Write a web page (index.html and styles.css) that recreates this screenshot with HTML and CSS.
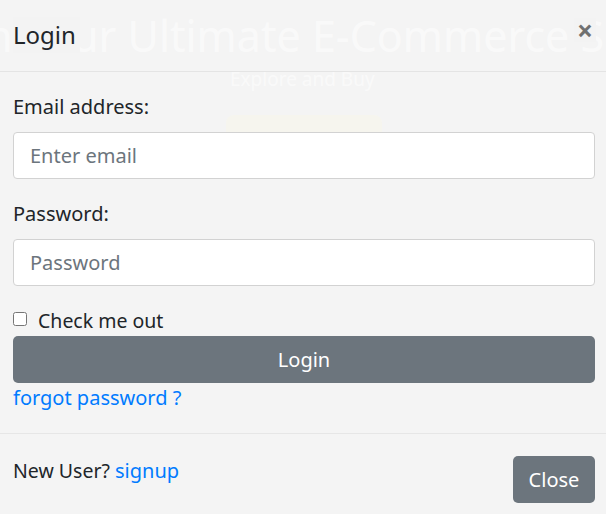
FILE: index.html
```html
<!DOCTYPE html>
<html>
<head>
<meta charset="utf-8">
<link rel="stylesheet" href="styles.css">
</head>
<body>
<div class="page">
  <div class="backdrop">
    <div class="bg-title">n Your Ultimate E-Commerce S</div>
    <div class="bg-sub">Explore and Buy</div>
    <div class="bg-btn"></div>
  </div>
  <div class="modal">
    <div class="modal-header">
      <h5 class="modal-title">Login</h5>
      <span class="close">&times;</span>
    </div>
    <div class="modal-body">
      <label class="label">Email address:</label>
      <input class="input" type="email" placeholder="Enter email">
      <label class="label label-pw">Password:</label>
      <input class="input" type="password" placeholder="Password">
      <div class="check">
        <input type="checkbox" class="checkbox">
        <span class="check-text">Check me out</span>
      </div>
      <button class="btn btn-block">Login</button>
      <a class="link forgot">forgot password ?</a>
    </div>
    <div class="modal-footer">
      <div class="new-user">New User? <a class="link">signup</a></div>
      <button class="btn btn-close">Close</button>
    </div>
  </div>
</div>
</body>
</html>
```

FILE: styles.css
```css
html, body {
  margin: 0;
  padding: 0;
  background: #f4f4f4;
}
.page {
  position: relative;
  width: 606px;
  height: 514px;
  overflow: hidden;
  font-family: "Noto Sans", "Open Sans", sans-serif;
  color: #212529;
}
.backdrop {
  position: absolute;
  left: 0;
  top: 0;
  width: 606px;
  height: 514px;
}
.bg-title {
  position: absolute;
  top: 6px;
  left: -14px;
  white-space: nowrap;
  font-size: 43px;
  color: rgba(255, 255, 255, 0.55);
}
.bg-sub {
  position: absolute;
  top: 66px;
  left: 230px;
  font-size: 19px;
  color: rgba(255, 255, 255, 0.55);
}
.bg-btn {
  position: absolute;
  top: 115px;
  left: 226px;
  width: 156px;
  height: 30px;
  border-radius: 8px;
  background: #f6f5ee;
}
.modal {
  position: relative;
  display: flex;
  flex-direction: column;
}
.modal-header {
  display: flex;
  justify-content: space-between;
  align-items: center;
  padding: 17px 10px 18px 13px;
  border-bottom: 1px solid #e4e4e4;
}
.modal-title {
  margin: 0;
  font-size: 24px;
  font-weight: 400;
  line-height: 36px;
  background: #f3f3f3;
  padding-right: 4px;
}
.close {
  font-size: 28px;
  font-weight: 700;
  line-height: 24px;
  color: #707070;
  margin-top: -11px;
  padding: 0 3px;
  background: #f3f3f3;
}
.modal-body {
  display: flex;
  flex-direction: column;
  padding: 20px 11px 20px 13px;
  border-bottom: 1px solid #e6e6e6;
}
.label {
  font-size: 20px;
  line-height: 30px;
  margin-bottom: 10px;
}
.label-pw {
  margin-top: 20px;
}
.input {
  box-sizing: border-box;
  height: 47px;
  width: 100%;
  border: 1px solid #d2d2d2;
  border-radius: 4px;
  background: #fff;
  padding: 0 16px;
  font-family: "Noto Sans", sans-serif;
  font-size: 20px;
  color: #495057;
  outline: none;
}
.input::placeholder {
  color: #6c757d;
}
.check {
  display: flex;
  align-items: center;
  margin-top: 20px;
  height: 30px;
}
.checkbox {
  margin: 0 11px 0 0;
  width: 14px;
  height: 14px;
  position: relative;
  top: -2px;
}
.check-text {
  font-size: 19.5px;
  line-height: 30px;
}
.btn {
  background: #6c757d;
  color: #fff;
  border: none;
  border-radius: 5px;
  font-family: "Noto Sans", sans-serif;
  font-size: 20px;
  height: 47px;
  padding: 0;
}
.btn-block {
  width: 100%;
}
.link {
  color: #007bff;
  text-decoration: none;
  font-size: 20px;
  line-height: 30px;
}
.forgot {
  margin-top: 0;
}
.modal-footer {
  display: flex;
  justify-content: space-between;
  align-items: flex-start;
  padding: 22px 11px 12px 13px;
}
.new-user {
  font-size: 19.5px;
  line-height: 30px;
}
.btn-close {
  width: 82px;
}
```
